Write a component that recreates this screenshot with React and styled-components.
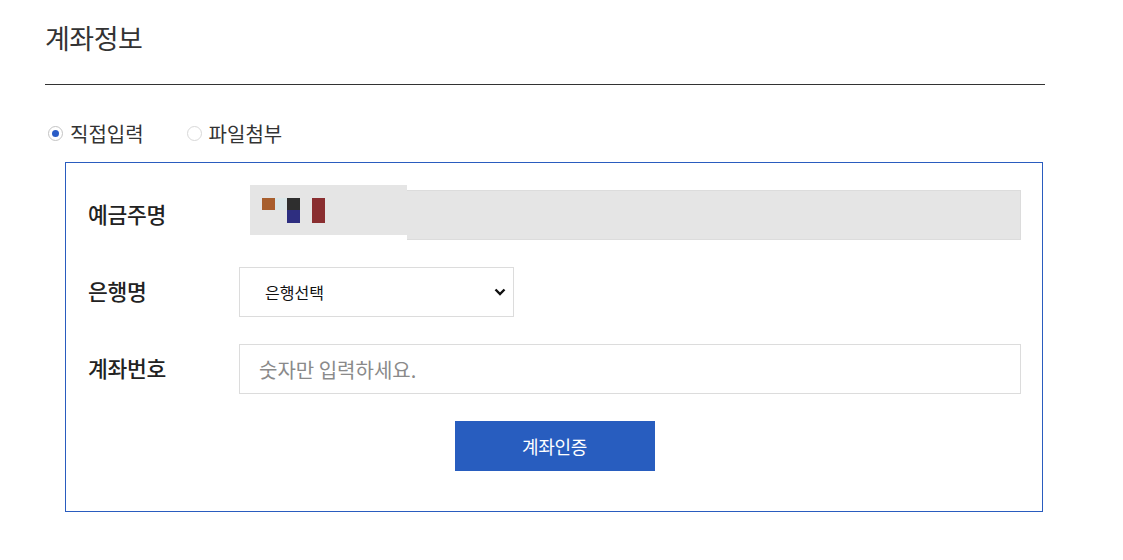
import React from "react";
import styled, { createGlobalStyle } from "styled-components";

const Global = createGlobalStyle`
  html, body { margin: 0; padding: 0; background: #fff; }
  body { font-family: "Noto Sans CJK KR", "Noto Sans", sans-serif; color: #333; }
  * { box-sizing: border-box; }
`;

const Page = styled.div`
  padding: 20px 0 0 45px;
  width: 1045px;
`;

const Title = styled.h2`
  margin: 0;
  font-size: 27px;
  font-weight: 400;
  line-height: 36px;
  color: #333;
  padding-bottom: 28px;
  border-bottom: 1px solid #333;
  letter-spacing: -0.5px;
`;

const RadioRow = styled.div`
  display: flex;
  align-items: center;
  gap: 43px;
  height: 32px;
  margin-top: 32px;
  padding-left: 3px;
`;

const RadioLabel = styled.label`
  display: flex;
  align-items: center;
  gap: 7px;
  font-size: 20px;
  color: #333;
  cursor: pointer;
`;

const RadioDot = styled.span`
  width: 15px;
  height: 15px;
  border-radius: 50%;
  border: 1px solid ${(p) => (p.$checked ? "#c4c4c4" : "#d8d8d8")};
  background: #fff;
  display: flex;
  align-items: center;
  justify-content: center;
  &::after {
    content: "";
    width: 7px;
    height: 7px;
    border-radius: 50%;
    background: ${(p) => (p.$checked ? "#2a5cc6" : "transparent")};
  }
`;

const Box = styled.div`
  margin: 13px 0 0 20px;
  width: 978px;
  border: 1px solid #2a5cbf;
  padding: 27px 21px 40px 22px;
  display: flex;
  flex-direction: column;
  gap: 27px;
`;

const Row = styled.div`
  display: flex;
  align-items: center;
  height: 50px;
`;

const Label = styled.div`
  width: 151px;
  flex: none;
  font-size: 21.5px;
  font-weight: 500;
  color: #222;
  letter-spacing: -0.3px;
  padding-bottom: 3px;
`;

const NameField = styled.div`
  display: flex;
  align-items: flex-start;
  flex: 1;
  height: 50px;
`;

const NameImage = styled.div`
  width: 157px;
  height: 50px;
  margin: -5px 0 0 11px;
  background: #e5e5e5;
  flex: none;
  display: flex;
`;

const NameInput = styled.div`
  flex: 1;
  height: 50px;
  background: #e5e5e5;
  border: 1px solid #dcdcdc;
  border-left: none;
`;

const SelectWrap = styled.div`
  position: relative;
  width: 275px;
  height: 50px;
`;

const Select = styled.select`
  appearance: none;
  -webkit-appearance: none;
  width: 100%;
  height: 100%;
  border: 1px solid #dcdcdc;
  background: #fff;
  padding: 0 0 0 25px;
  font-family: "Noto Sans CJK KR", sans-serif;
  font-size: 16px;
  color: #111;
  outline: none;
  border-radius: 0;
`;

const Chevron = styled.svg`
  position: absolute;
  right: 8px;
  top: 50%;
  transform: translateY(-50%);
  pointer-events: none;
`;

const TextInput = styled.input`
  flex: 1;
  height: 50px;
  border: 1px solid #dcdcdc;
  padding: 0 19px;
  font-family: "Noto Sans CJK KR", sans-serif;
  font-size: 20px;
  color: #333;
  outline: none;
  border-radius: 0;
  &::placeholder { color: #8a8a8a; }
`;

const ButtonRow = styled.div`
  display: flex;
  justify-content: center;
`;

const Button = styled.button`
  width: 200px;
  height: 50px;
  border: none;
  background: #285dbf;
  color: #fff;
  font-family: "Noto Sans CJK KR", sans-serif;
  font-size: 18px;
  cursor: pointer;
  letter-spacing: -0.3px;
`;

export default function App() {
  return (
    <>
      <Global />
      <Page>
        <Title>계좌정보</Title>
        <RadioRow>
          <RadioLabel>
            <RadioDot $checked />
            직접입력
          </RadioLabel>
          <RadioLabel>
            <RadioDot />
            파일첨부
          </RadioLabel>
        </RadioRow>
        <Box>
          <Row>
            <Label>예금주명</Label>
            <NameField>
              <NameImage>
                <svg width="157" height="50" viewBox="0 0 157 50">
                  <rect x="12" y="13" width="13" height="12" fill="#a85f2e" />
                  <rect x="25" y="13" width="12" height="12" fill="#dae6e8" />
                  <rect x="37" y="13" width="13" height="12" fill="#2e2e2e" />
                  <rect x="37" y="25" width="13" height="13" fill="#2e2e80" />
                  <rect x="62" y="13" width="13" height="25" fill="#8a2e30" />
                </svg>
              </NameImage>
              <NameInput />
            </NameField>
          </Row>
          <Row>
            <Label>은행명</Label>
            <SelectWrap>
              <Select defaultValue="">
                <option value="">은행선택</option>
              </Select>
              <Chevron width="12" height="8" viewBox="0 0 12 8">
                <path d="M1.5 1.5 L6 6 L10.5 1.5" fill="none" stroke="#111" strokeWidth="2.4" />
              </Chevron>
            </SelectWrap>
          </Row>
          <Row>
            <Label>계좌번호</Label>
            <TextInput placeholder="숫자만 입력하세요." />
          </Row>
          <ButtonRow>
            <Button>계좌인증</Button>
          </ButtonRow>
        </Box>
      </Page>
    </>
  );
}
